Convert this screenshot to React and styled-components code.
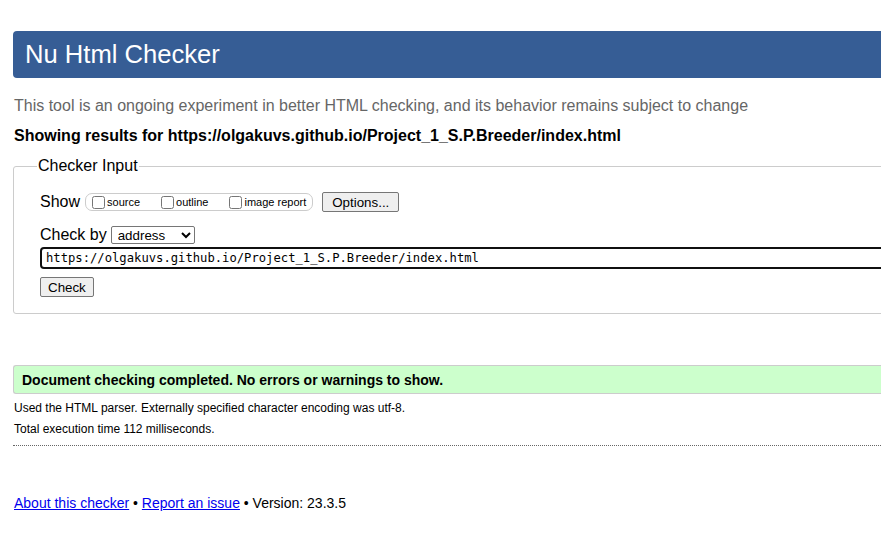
import React from "react";
import styled, { createGlobalStyle } from "styled-components";

const Global = createGlobalStyle`
  html, body { margin: 0; padding: 0; background: #fff; overflow: hidden; }
  body { font-family: "Liberation Sans", Arial, sans-serif; color: #000; }
`;

const Page = styled.div`
  width: 1000px;
  padding: 31px 0 0 13px;
`;

const Header = styled.h1`
  margin: 0;
  height: 47px;
  display: flex;
  align-items: center;
  padding-left: 12px;
  background: #365d95;
  color: #fff;
  font-weight: normal;
  font-size: 25.6px;
  border-radius: 4px 0 0 4px;
`;

const Lead = styled.p`
  margin: 19px 0 0 1px;
  font-size: 16px;
  line-height: 18px;
  color: #666;
`;

const Results = styled.p`
  margin: 12px 0 0 1px;
  font-size: 16px;
  line-height: 18px;
  font-weight: bold;
`;

const Fieldset = styled.fieldset`
  margin: 12px 0 0 0;
  padding: 17px 0 16px 26px;
  border: 1px solid #ccc;
  border-radius: 3px;
`;

const Legend = styled.legend`
  margin-left: -3px;
  padding: 0 1px;
  font-size: 16px;
  line-height: 18px;
`;

const Row = styled.div`
  display: flex;
  align-items: center;
  height: 20px;
  margin-bottom: ${(p) => p.$mb || 0}px;
  font-size: 16px;
`;

const Label = styled.span`
  margin-right: ${(p) => p.$mr || 4}px;
`;

const Group = styled.div`
  display: flex;
  align-items: center;
  height: 16px;
  border: 1px solid #ccc;
  border-radius: 7px;
  padding: 0 6px 0 5px;
  margin-right: 9px;
`;

const CheckItem = styled.label`
  display: flex;
  align-items: center;
  font-size: 11px;
  margin-right: ${(p) => (p.$last ? 0 : 20)}px;
`;

const Box = styled.input.attrs({ type: "checkbox" })`
  width: 13px;
  height: 13px;
  margin: 0 2px 0 1px;
`;

const Button = styled.button`
  height: 20px;
  padding: 0 ${(p) => p.$px || 7}px;
  font-family: "Liberation Sans", Arial, sans-serif;
  font-size: 13.333px;
  color: #000;
  background: #efefef;
  border: 1px solid #767676;
  border-radius: 2px;
`;

const Select = styled.select`
  width: 84px;
  height: 18px;
  font-family: "Liberation Sans", Arial, sans-serif;
  font-size: 13.333px;
  padding: 0 0 0 2px;
  border: 1px solid #767676;
  border-radius: 2px;
  background: #fff;
  color: #000;
`;

const UrlInput = styled.input`
  display: block;
  box-sizing: border-box;
  width: 1000px;
  height: 22px;
  margin: 0 0 8px 0;
  padding: 0 4px;
  border: 2px solid #101010;
  border-radius: 4px;
  font-family: "DejaVu Sans Mono", "Liberation Mono", monospace;
  font-size: 12.2px;
  color: #000;
  outline: none;
`;

const Success = styled.div`
  margin-top: 51px;
  height: 27px;
  display: flex;
  align-items: center;
  padding-left: 8px;
  background: #ccffcc;
  border: 1px solid #ccc;
  border-right: none;
  border-radius: 3px 0 0 3px;
  font-size: 14px;
  font-weight: bold;
`;

const Info = styled.p`
  margin: ${(p) => p.$mt}px 0 0 1px;
  font-size: 12px;
  line-height: 14px;
`;

const Divider = styled.hr`
  margin: 9px 0 0 0;
  border: none;
  border-top: 1px dotted #666;
`;

const Footer = styled.p`
  margin: 49px 0 0 1px;
  font-size: 14px;
  line-height: 16px;
  color: #000;
`;

const Link = styled.a`
  color: #0000ee;
  text-decoration: underline;
`;

export default function App() {
  return (
    <>
      <Global />
      <Page>
        <Header>Nu Html Checker</Header>
        <Lead>
          This tool is an ongoing experiment in better HTML checking, and its behavior remains subject to change
        </Lead>
        <Results>Showing results for https://olgakuvs.github.io/Project_1_S.P.Breeder/index.html</Results>
        <Fieldset>
          <Legend>Checker Input</Legend>
          <Row $mb={13}>
            <Label $mr={5}>Show</Label>
            <Group>
              <CheckItem>
                <Box />source
              </CheckItem>
              <CheckItem>
                <Box />outline
              </CheckItem>
              <CheckItem $last>
                <Box />image report
              </CheckItem>
            </Group>
            <Button type="button" $px={9}>Options...</Button>
          </Row>
          <Row $mb={2}>
            <Label>Check by</Label>
            <Select defaultValue="address">
              <option value="address">address</option>
              <option value="file">file upload</option>
              <option value="text">text input</option>
            </Select>
          </Row>
          <UrlInput defaultValue="https://olgakuvs.github.io/Project_1_S.P.Breeder/index.html" />
          <Row>
            <Button type="button" $px={7}>Check</Button>
          </Row>
        </Fieldset>
        <Success>Document checking completed. No errors or warnings to show.</Success>
        <Info $mt={7}>Used the HTML parser. Externally specified character encoding was utf-8.</Info>
        <Info $mt={7}>Total execution time 112 milliseconds.</Info>
        <Divider />
        <Footer>
          <Link href="#">About this checker</Link> • <Link href="#">Report an issue</Link> • Version: 23.3.5
        </Footer>
      </Page>
    </>
  );
}
